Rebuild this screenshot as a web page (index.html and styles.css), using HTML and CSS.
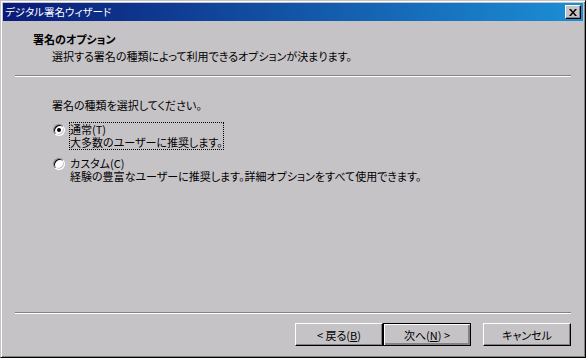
FILE: index.html
```html
<!DOCTYPE html>
<html>
  <head>
    <meta charset="utf-8">
    <title>デジタル署名ウィザード</title>
    <link rel="stylesheet" href="styles.css">
  </head>
  <body>
    <div class="window">
      <div class="titlebar">
        <span class="title">デジタル署名ウィザード</span>
        <button class="close" aria-label="閉じる">
          <svg width="8" height="7" viewBox="0 0 8 7">
            <path d="M0 0h2l2 2.5L6 0h2L5 3.5 8 7H6L4 4.5 2 7H0l3-3.5z" fill="#000"/>
          </svg>
        </button>
      </div>

      <div class="header">
        <div class="header-title">署名のオプション</div>
        <div class="header-sub">選択する署名の種類によって利用できるオプションが決まります。</div>
      </div>
      <div class="sep"></div>

      <div class="content">
        <p class="prompt">署名の種類を選択してください。</p>
        <label class="option">
          <span class="radio checked"></span>
          <span class="option-text focus">通常(T)<br>大多数のユーザーに推奨します。</span>
        </label>
        <label class="option">
          <span class="radio"></span>
          <span class="option-text">カスタム(C)<br>経験の豊富なユーザーに推奨します。詳細オプションをすべて使用できます。</span>
        </label>
      </div>

      <div class="sep"></div>
      <div class="buttons">
        <button class="btn">&lt; 戻る(<u>B</u>)</button>
        <button class="btn default">次へ(<u>N</u>) &gt;</button>
        <button class="btn cancel">キャンセル</button>
      </div>
    </div>
  </body>
</html>
```

FILE: styles.css
```css
body {
  margin: 0;
  background: #c6c3c6;
}
.window {
  width: 586px;
  height: 358px;
  box-sizing: border-box;
  display: flex;
  flex-direction: column;
  padding: 2px;
  background: #c6c3c6;
  border: 1px solid;
  border-color: #c6c3c6 #000 #000 #c6c3c6;
  box-shadow: inset 1px 1px #fff, inset -1px -1px #848284;
  font-family: "Noto Sans CJK JP", "Noto Sans", sans-serif;
  font-size: 11px;
  font-feature-settings: "palt";
  color: #000;
}

/* title bar */
.titlebar {
  height: 18px;
  display: flex;
  align-items: center;
  justify-content: space-between;
  padding: 0 2px 0 2px;
  background: linear-gradient(to right, #0a1a78, #1b8fd6);
}
.title {
  color: #fff;
  font-size: 10.5px;
  line-height: 14px;
}
.close {
  width: 16px;
  height: 14px;
  padding: 0;
  display: flex;
  align-items: center;
  justify-content: center;
  background: #c6c3c6;
  border: 1px solid;
  border-color: #fff #000 #000 #fff;
  box-shadow: inset -1px -1px #848284;
}

/* header */
.header {
  padding: 11px 0 0 30px;
  line-height: 14px;
}
.header-title {
  font-weight: bold;
}
.header-sub {
  margin: 3px 0 0 19px;
}
.sep {
  height: 0;
  margin: 12px 12px 0 12px;
  border-top: 1px solid #848284;
  border-bottom: 1px solid #fff;
}

/* options */
.content {
  flex: 1;
  padding: 21px 0 0 49px;
}
.prompt {
  margin: 0 0 10px 0;
  line-height: 14px;
}
.option {
  display: flex;
  align-items: flex-start;
  margin-bottom: 6px;
}
.radio {
  position: relative;
  width: 10px;
  height: 10px;
  margin: 2px 4px 0 1px;
  border-radius: 50%;
  background: #fff;
  border: 1px solid;
  border-color: #848284 #fff #fff #848284;
  box-shadow: inset 1px 1px #000, inset -1px -1px #c6c3c6;
}
.radio.checked::after {
  content: "";
  position: absolute;
  left: 3px;
  top: 3px;
  width: 4px;
  height: 4px;
  border-radius: 50%;
  background: #000;
}
.option-text {
  line-height: 13px;
  border: 1px dotted transparent;
}
.option-text.focus {
  border-color: #000;
}

/* buttons */
.buttons {
  display: flex;
  justify-content: flex-end;
  padding: 9px 12px 9px 0;
}
.btn {
  width: 88px;
  height: 23px;
  padding: 0;
  background: #c6c3c6;
  font-family: inherit;
  font-size: 11px;
  font-feature-settings: "palt";
  color: #000;
  border: 1px solid;
  border-color: #fff #000 #000 #fff;
  box-shadow: inset -1px -1px #848284;
}
.btn.default {
  border: 1px solid #000;
  box-shadow: inset 1px 1px #fff, inset -2px -2px #848284, inset -1px -1px #000;
}
.btn.cancel {
  margin-left: 12px;
}
```
